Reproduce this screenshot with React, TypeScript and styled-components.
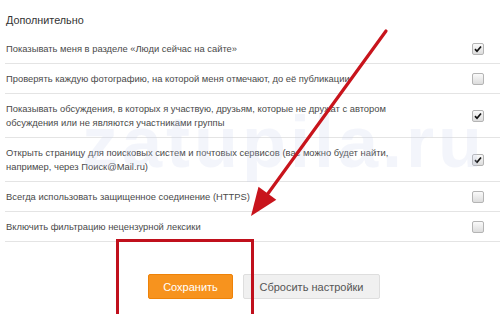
import React from "react";
import styled, { createGlobalStyle } from "styled-components";

const Global = createGlobalStyle`
  html, body { margin: 0; padding: 0; background: #fff; }
  body { font-family: "Liberation Sans", Arial, sans-serif; }
`;

const Page = styled.div`
  position: relative;
  width: 500px;
  height: 314px;
  overflow: hidden;
  background: #fff;
`;

const Title = styled.div`
  font-size: 10.8px;
  line-height: 14px;
  color: #333;
  padding: 13px 0 7px 6px;
`;

const List = styled.div`
  margin-left: 5px;
`;

const Row = styled.div`
  display: flex;
  align-items: center;
  justify-content: space-between;
  padding: 8px 16px 7px 1px;
  border-bottom: 1px solid #e4e4e4;
`;

const Label = styled.div`
  font-size: 9.4px;
  line-height: 14px;
  color: #4a4a4a;
  white-space: nowrap;
`;

const Box = styled.span`
  flex: none;
  width: 10px;
  height: 10px;
  border: 1px solid #b4b4b4;
  border-radius: 2px;
  background: linear-gradient(#fafafa, #dcdcdc);
  display: flex;
  align-items: center;
  justify-content: center;
`;

const Actions = styled.div`
  display: flex;
  gap: 10px;
  padding: 32px 0 0 148px;
`;

const Button = styled.button<{ $primary?: boolean }>`
  height: 25px;
  padding: 0;
  width: ${(p) => (p.$primary ? "85px" : "137px")};
  border-radius: 2px;
  font-family: "Liberation Sans", Arial, sans-serif;
  font-size: 11px;
  border: 1px solid ${(p) => (p.$primary ? "#ee8208" : "#dedede")};
  background: ${(p) => (p.$primary ? "#f7931e" : "#f0f0f0")};
  color: ${(p) => (p.$primary ? "#fff" : "#555")};
`;

const Watermark = styled.div`
  position: absolute;
  left: 82px;
  top: 106px;
  font-family: "Liberation Sans", sans-serif;
  font-weight: bold;
  font-size: 72px;
  line-height: 72px;
  letter-spacing: 4px;
  color: rgba(200, 208, 235, 0.22);
  pointer-events: none;
`;

const Highlight = styled.div`
  position: absolute;
  left: 116px;
  top: 239px;
  width: 132px;
  height: 90px;
  border: 3px solid #c0101c;
`;

const ArrowSvg = styled.svg`
  position: absolute;
  left: 0;
  top: 0;
  pointer-events: none;
`;

const Check = () => (
  <svg width="8" height="8" viewBox="0 0 8 8">
    <path d="M1 4.2 L3 6.3 L7 1.5" stroke="#111" strokeWidth="1.7" fill="none" />
  </svg>
);

const rows: { text: React.ReactNode; on: boolean }[] = [
  { text: "Показывать меня в разделе «Люди сейчас на сайте»", on: true },
  { text: "Проверять каждую фотографию, на которой меня отмечают, до её публикации", on: false },
  {
    text: (
      <>
        Показывать обсуждения, в которых я участвую, друзьям, которые не дружат с автором
        <br />
        обсуждения или не являются участниками группы
      </>
    ),
    on: true,
  },
  {
    text: (
      <>
        Открыть страницу для поисковых систем и почтовых сервисов (вас можно будет найти,
        <br />
        например, через Поиск@Mail.ru)
      </>
    ),
    on: true,
  },
  { text: "Всегда использовать защищенное соединение (HTTPS)", on: false },
  { text: "Включить фильтрацию нецензурной лексики", on: false },
];

export default function App() {
  return (
    <Page>
      <Global />
      <Title>Дополнительно</Title>
      <List>
        {rows.map((r, i) => (
          <Row key={i}>
            <Label>{r.text}</Label>
            <Box>{r.on && <Check />}</Box>
          </Row>
        ))}
      </List>
      <Actions>
        <Button $primary>Сохранить</Button>
        <Button>Сбросить настройки</Button>
      </Actions>
      <Watermark>zatupila.ru</Watermark>
      <Highlight />
      <ArrowSvg width="500" height="314" viewBox="0 0 500 314">
        <line x1="386" y1="31" x2="264" y2="199" stroke="#c8141c" strokeWidth="3.2" strokeLinecap="round" />
        <polygon points="251,216 258.5,186.8 276.3,199.8" fill="#c8141c" />
      </ArrowSvg>
    </Page>
  );
}
